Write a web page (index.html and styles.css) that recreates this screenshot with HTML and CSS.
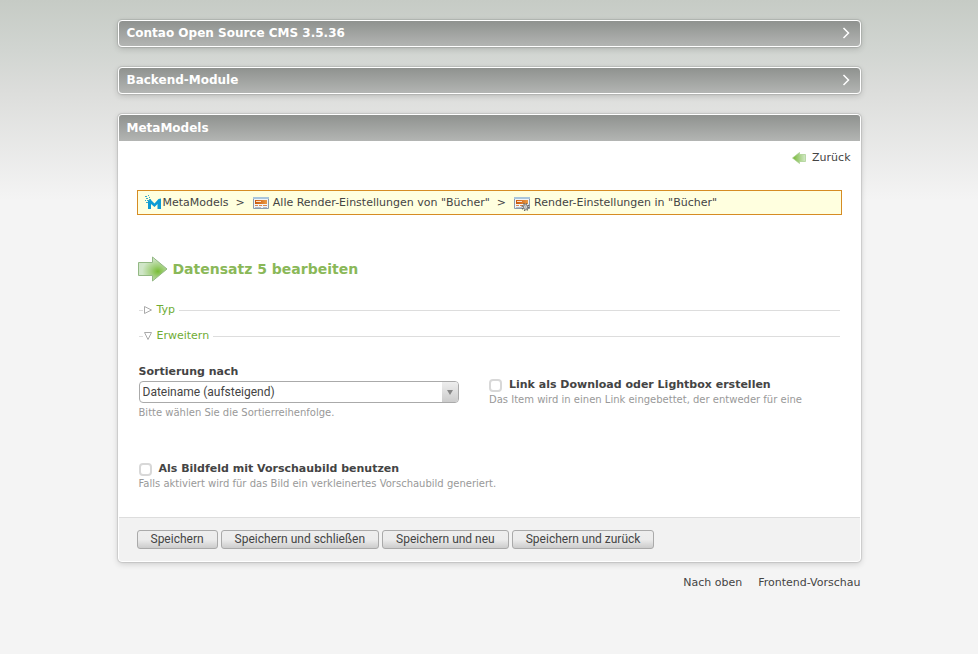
FILE: index.html
```html
<!DOCTYPE html>
<html lang="de">
<head>
<meta charset="utf-8">
<title>MetaModels - Contao Open Source CMS 3.5.36</title>
<link rel="stylesheet" href="styles.css">
</head>
<body>
<div class="page">
  <header class="bar">
    <h1>Contao Open Source CMS 3.5.36</h1>
    <svg class="chevron" viewBox="0 0 8 12"><path d="M1.500 1 6.500 6l-5 5"/></svg>
  </header>
  <nav class="bar">
    <h2>Backend-Module</h2>
    <svg class="chevron" viewBox="0 0 8 12"><path d="M1.500 1 6.500 6l-5 5"/></svg>
  </nav>
  <main class="panel">
    <h2 class="panel-title">MetaModels</h2>
    <div class="back-row">
      <a class="back" href="#"><svg width="14" height="12" viewBox="0 0 14 12"><defs><linearGradient id="gb"><stop offset="0" stop-color="#76b732"/><stop offset=".4" stop-color="#9bcb72"/><stop offset="1" stop-color="#d3e9c8"/></linearGradient></defs><path d="M.5 6 7.500 .5V2.500H13.500V9.500H7.500V11.500Z" fill="url(#gb)" stroke="#a6cf8c" stroke-width=".7"/></svg>Zurück</a>
    </div>
    <ul class="crumbs">
      <li><a href="#"><svg width="16" height="16" viewBox="0 0 16 16"><path d="M3 14V6L5.500 4.500 9.500 8.500 13.500 4 16 3.500V14H12.500V9L9.500 12 6 9V14Z" fill="#0c9bd5"/><path d="M0 1h2v1H0zM3 0h1v1H3zM1 3h2v1H1zM4 2h1v1H4zM0 5h1v1H0zM2 5h2v1H2zM4 4h2v1H4zM1 7h2v1H1z" fill="#35a9c9"/></svg>MetaModels</a><span class="sep">&gt;</span></li>
      <li><a href="#"><svg class="gap" width="16" height="16" viewBox="0 0 16 16"><use href="#win"/></svg>Alle Render-Einstellungen von "Bücher"</a><span class="sep">&gt;</span></li>
      <li><a href="#"><svg class="gap" width="16" height="16" viewBox="0 0 16 16"><defs><linearGradient id="or"><stop offset="0" stop-color="#c9560c"/><stop offset="1" stop-color="#eb9a45"/></linearGradient><g id="win"><path d="M.5 2.500h15v11H.5z" fill="#f1f4f8" stroke="#8d9aad"/><path d="M0 2h16v2H0z" fill="#a9c6dc"/><path d="M2 5h12v4H2z" fill="url(#or)"/><path d="M3 6h5v1H3z" fill="#f8dfcc"/><path d="M2 10h3v1H2zM6 10h3v1H6zM10 10h4v1h-4z" fill="#dc8850"/><path d="M2 12h6v1H2zM10 12h4v1h-4z" fill="#b5bdca"/></g></defs><use href="#win"/><circle cx="11.500" cy="12" r="3.300" fill="none" stroke="#666" stroke-width="1.500" stroke-dasharray="1.300 1.290"/><circle cx="11.500" cy="12" r="2.300" fill="#e8e8e8" stroke="#777"/><circle cx="11.500" cy="12" r=".8" fill="#fff" stroke="#888" stroke-width=".6"/></svg>Render-Einstellungen in "Bücher"</a></li>
    </ul>
    <h2 class="headline"><svg width="30" height="26" viewBox="0 0 30 26"><defs><radialGradient id="ga" cx=".68" cy=".6" r=".55"><stop offset="0" stop-color="#78bd35"/><stop offset=".4" stop-color="#9fce78"/><stop offset="1" stop-color="#d0e6c8"/></radialGradient></defs><path d="M.5 6.500H14.500V1L29 13 14.500 25V19.500H.5Z" fill="url(#ga)" stroke="#93b884"/></svg>Datensatz 5 bearbeiten</h2>
    <form>
      <div class="legend"><button type="button"><svg width="8" height="8" viewBox="0 0 8 8"><path d="M.5 .5 7.500 4l-7 3.500z"/></svg>Typ</button></div>
      <div class="legend"><button type="button"><svg width="8" height="8" viewBox="0 0 8 8"><path d="M.5 .5h7L4 7.500z"/></svg>Erweitern</button></div>
      <div class="fields">
        <div class="field">
          <label class="label" for="sort">Sortierung nach</label>
          <div class="select">
            <select id="sort"><option>Dateiname (aufsteigend)</option></select>
            <span class="arrow"></span>
          </div>
          <p class="tip">Bitte wählen Sie die Sortierreihenfolge.</p>
        </div>
        <div class="field check">
          <div class="check-row"><input type="checkbox" id="link"><label for="link">Link als Download oder Lightbox erstellen</label></div>
          <p class="tip">Das Item wird in einen Link eingebettet, der entweder für eine</p>
        </div>
        <div class="field check">
          <div class="check-row"><input type="checkbox" id="image"><label for="image">Als Bildfeld mit Vorschaubild benutzen</label></div>
          <p class="tip">Falls aktiviert wird für das Bild ein verkleinertes Vorschaubild generiert.</p>
        </div>
      </div>
      <div class="submit">
        <button type="submit">Speichern</button>
        <button type="submit">Speichern und schließen</button>
        <button type="submit">Speichern und neu</button>
        <button type="submit">Speichern und zurück</button>
      </div>
    </form>
  </main>
  <footer class="foot"><a href="#">Nach oben</a><a href="#">Frontend-Vorschau</a></footer>
</div>
</body>
</html>
```
FILE: styles.css
```css
* { box-sizing: border-box; }
html { background: #f4f4f4; }
body {
  margin: 0;
  min-height: 100vh;
  background: linear-gradient(#c6cbc5 0, #d1d5d1 50px, #dcdddb 90px, #f4f4f4 200px) no-repeat;
  font: 11px/16px "DejaVu Sans", Verdana, sans-serif;
  color: #444;
}
h1, h2, p, ul { margin: 0; padding: 0; }
a { color: inherit; text-decoration: none; }
button, select, input { font: inherit; color: inherit; margin: 0; }
.page { max-width: 743px; margin: 0 auto; padding-top: 20px; }
.bar, .panel {
  border: 1px solid #fff;
  border-radius: 4px;
  box-shadow: 0 0 1px 1px rgba(0, 0, 0, .1), 0 2px 6px rgba(0, 0, 0, .16);
}
.bar {
  display: flex;
  align-items: center;
  justify-content: space-between;
  height: 27px;
  margin-bottom: 20px;
  padding: 0 10px 2px 8px;
  background: linear-gradient(#8f928f, #b3b5b3);
}
.bar h1, .bar h2, .panel-title { font-size: 12px; line-height: 26px; color: #fff; }
.chevron { width: 8px; height: 12px; fill: none; stroke: #fff; stroke-width: 1.5; }
.panel { background: #fff; }
.panel-title {
  padding: 0 8px;
  border-radius: 3px 3px 0 0;
  background: linear-gradient(#8f928f, #b3b5b3);
}
.back-row { display: flex; justify-content: flex-end; padding: 9px 9px 0; }
.back { display: flex; align-items: center; gap: 6px; }
.crumbs {
  display: flex;
  margin: 24px 18px 0;
  padding: 4px 7px 3px;
  border: 1px solid #d68c23;
  background: #ffffdf;
  list-style: none;
}
.crumbs li, .crumbs a { display: flex; align-items: center; }
.crumbs svg { margin-right: 2px; }
.crumbs svg.gap { margin-right: 4px; }
.sep { margin: 0 8px 0 7px; }
.headline {
  display: flex;
  align-items: center;
  gap: 5px;
  margin: 41px 19px 0;
  font-size: 14px;
  color: #8ab858;
}
.legend { display: flex; align-items: center; margin: 0 20px 10px; }
.headline + form { padding-top: 20px; }
.legend::before { content: ""; width: 4px; height: 1px; background: #ddd; }
.legend::after { content: ""; flex: 1; height: 1px; background: #ddd; }
.legend button {
  display: flex;
  align-items: center;
  gap: 5px;
  padding: 0 4px 0 1px;
  border: 0;
  background: none;
  color: #6fac34;
}
.legend svg { fill: none; stroke: #aaa; }
.fields {
  display: grid;
  grid-template-columns: 1fr 1fr;
  column-gap: 30px;
  row-gap: 27px;
  padding: 9px 50px 26px 20px;
}
.field { min-width: 0; }
.label, .check-row label { font-weight: bold; }
.label { display: block; line-height: 18px; }
.select { position: relative; height: 22px; }
.select select {
  width: 100%;
  height: 22px;
  padding: 0 3px;
  appearance: none;
  border: 1px solid #aaa;
  border-radius: 4px;
  background: #fff;
  font: 12px Roboto, sans-serif;
}
.arrow {
  position: absolute;
  top: 1px;
  right: 1px;
  width: 16px;
  height: 20px;
  border-radius: 0 3px 3px 0;
  background: linear-gradient(#eee, #ccc);
  pointer-events: none;
}
.arrow::after {
  content: "";
  position: absolute;
  top: 8px;
  left: 5px;
  border: solid transparent;
  border-width: 5px 3px 0;
  border-top-color: #888;
}
.tip { font-size: 10px; line-height: 14px; color: #999; white-space: nowrap; }
.select + .tip { padding-top: 3px; }
.check { padding-top: 14px; }
.check-row { display: flex; align-items: center; gap: 7px; }
.check-row input {
  appearance: none;
  width: 13px;
  height: 13px;
  border: 2px solid #d8d8d8;
  border-radius: 4px;
  background: #fff;
}
.submit {
  display: flex;
  gap: 3px;
  padding: 12px 18px;
  border-top: 1px solid #ddd;
  border-radius: 0 0 3px 3px;
  background: #f2f2f2;
}
.submit button {
  height: 19px;
  padding: 0 13px;
  border: 1px solid #aaa;
  border-radius: 3px;
  background: linear-gradient(#eee, #ececec 50%, #ccc);
  font: 12px/17px Roboto, sans-serif;
}
.foot { display: flex; justify-content: flex-end; gap: 16px; padding-top: 13px; }
```
